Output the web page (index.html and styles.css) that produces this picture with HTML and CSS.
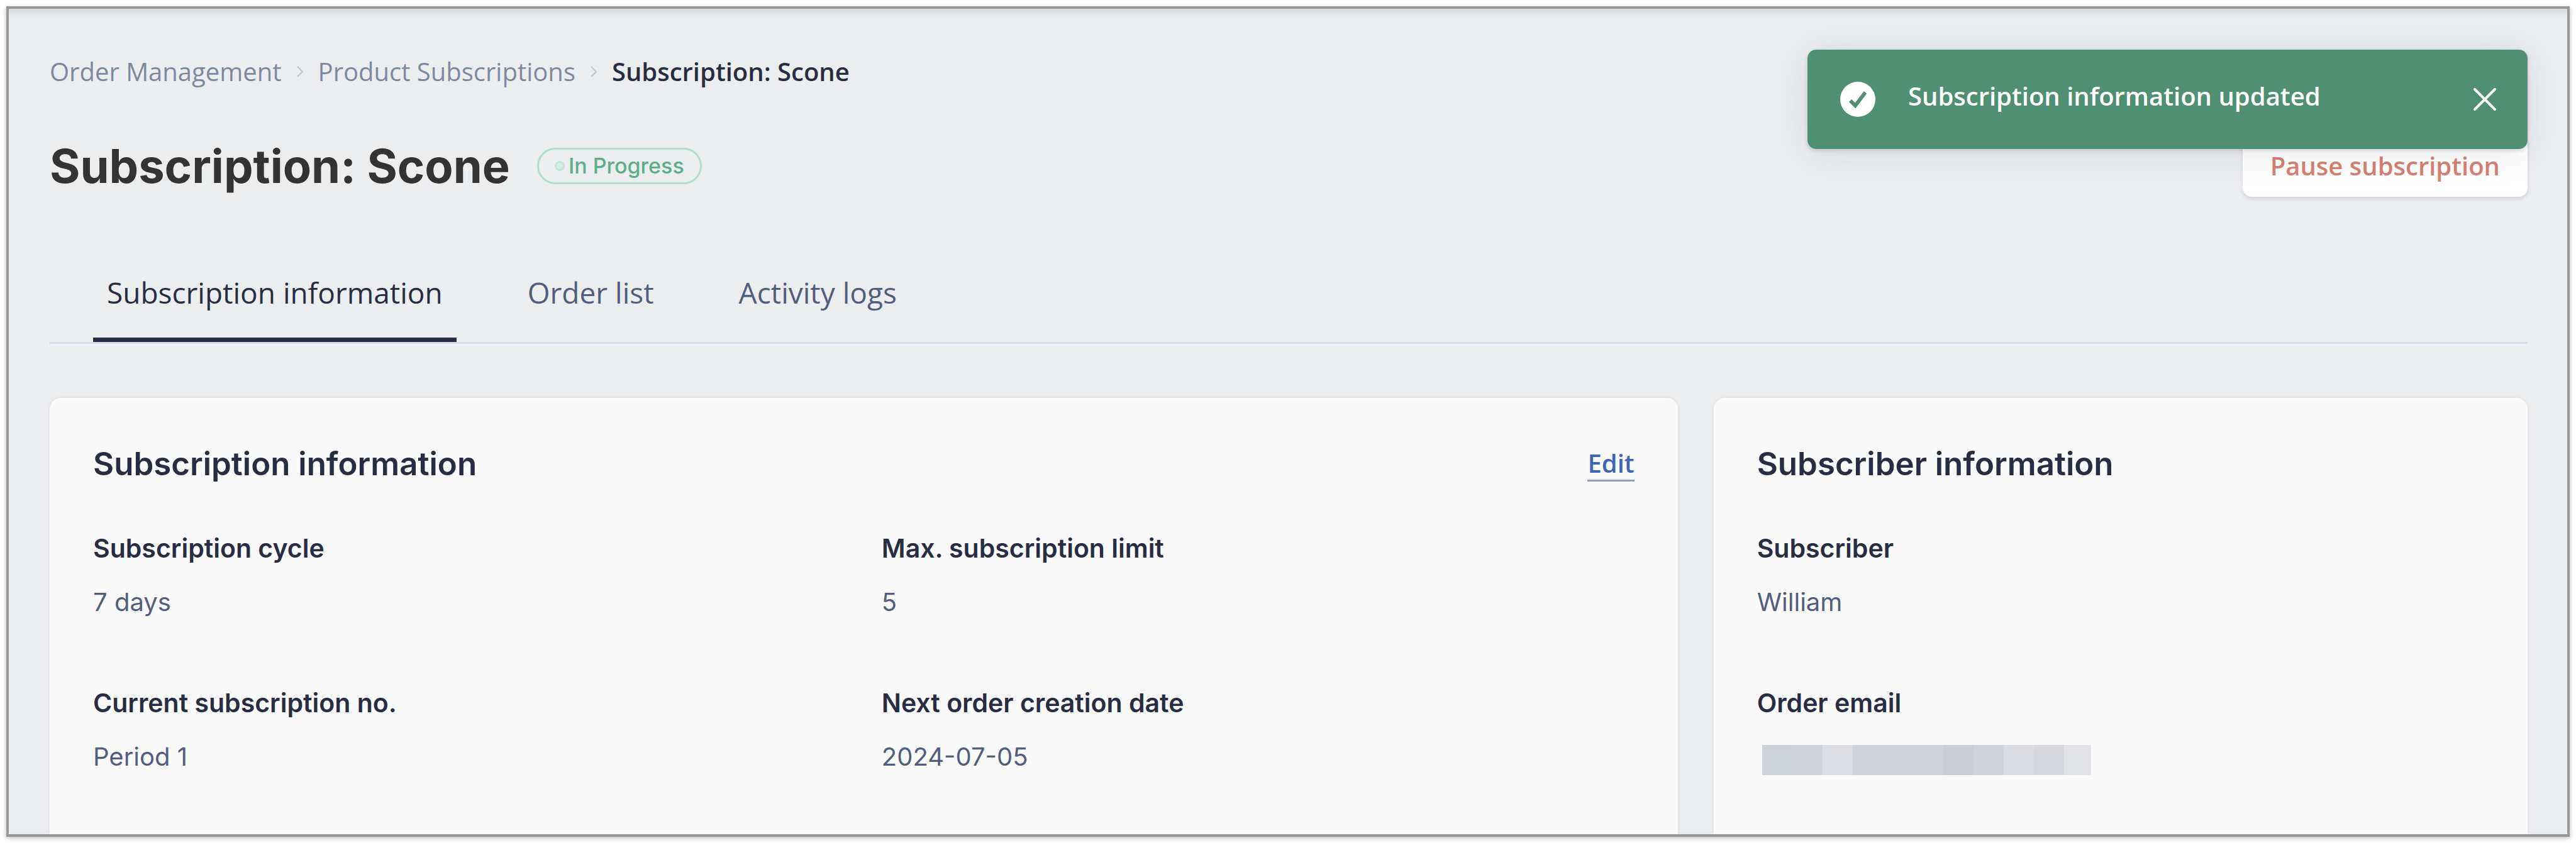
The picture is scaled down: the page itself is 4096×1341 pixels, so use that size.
FILE: index.html
```html
<!DOCTYPE html>
<html lang="en">
<head>
    <meta charset="UTF-8">
    <meta name="viewport" content="width=device-width, initial-scale=1.0">
    <title>Subscription: Scone</title>
    <link rel="stylesheet" href="styles.css">
</head>
<body>

<div class="window">
    <div class="toast" role="status">
        <svg class="toast-icon" viewBox="0 0 56 56" aria-hidden="true">
            <circle cx="28" cy="28" r="28" fill="#fff"/>
            <path d="M16 30l8 8 16-21" fill="none" stroke="#4f9074" stroke-width="6"/>
        </svg>
        <p class="toast-text">Subscription information updated</p>
        <button type="button" class="toast-close" aria-label="Close">
            <svg viewBox="0 0 36 36" aria-hidden="true">
                <path d="M2 2l32 32M34 2L2 34" fill="none" stroke="#fff" stroke-width="4" stroke-linecap="round"/>
            </svg>
        </button>
    </div>

    <nav class="breadcrumb">
        <a href="#">Order Management</a>
        <svg class="chevron" viewBox="0 0 10 18" aria-hidden="true"><path d="M1 1l8 8-8 8"/></svg>
        <a href="#">Product Subscriptions</a>
        <svg class="chevron" viewBox="0 0 10 18" aria-hidden="true"><path d="M1 1l8 8-8 8"/></svg>
        <span class="current">Subscription: Scone</span>
    </nav>

    <header class="page-header">
        <h1>Subscription: Scone</h1>
        <span class="badge"><span class="badge-dot"></span>In Progress</span>
        <button type="button" class="pause-button">Pause subscription</button>
    </header>

    <nav class="tabs">
        <a href="#" class="tab active">Subscription information</a>
        <a href="#" class="tab">Order list</a>
        <a href="#" class="tab">Activity logs</a>
    </nav>

    <main class="cards">
        <section class="card">
            <div class="card-header">
                <h2>Subscription information</h2>
                <a href="#" class="edit-link">Edit</a>
            </div>
            <dl class="fields two-columns">
                <div class="field">
                    <dt>Subscription cycle</dt>
                    <dd>7 days</dd>
                </div>
                <div class="field">
                    <dt>Max. subscription limit</dt>
                    <dd>5</dd>
                </div>
                <div class="field">
                    <dt>Current subscription no.</dt>
                    <dd>Period 1</dd>
                </div>
                <div class="field">
                    <dt>Next order creation date</dt>
                    <dd>2024-07-05</dd>
                </div>
            </dl>
        </section>

        <section class="card">
            <div class="card-header">
                <h2>Subscriber information</h2>
            </div>
            <dl class="fields">
                <div class="field">
                    <dt>Subscriber</dt>
                    <dd>William</dd>
                </div>
                <div class="field">
                    <dt>Order email</dt>
                    <dd><span class="redacted"></span></dd>
                </div>
            </dl>
        </section>
    </main>
</div>

</body>
</html>
```
FILE: styles.css
```css
* {
    box-sizing: border-box;
}

body {
    margin: 0;
    padding: 10px;
    height: 100vh;
    background-color: #fff;
    font-family: 'Open Sans', sans-serif;
    font-size: 40px;
    line-height: 61px;
    color: #282d43;
}

h1, h2, p, dl, dt, dd {
    margin: 0;
}

a {
    color: inherit;
    text-decoration: none;
}

button {
    font: inherit;
    border: none;
    cursor: pointer;
}

.window {
    position: relative;
    height: 100%;
    padding: 69px 63px 0 65px;
    overflow: hidden;
    background: linear-gradient(#d9dadc, #ebedef 14px);
    border: 4px solid #96999b;
    box-shadow: 0 2px 6px rgba(0, 0, 0, 0.3);
    display: flex;
    flex-direction: column;
}

/* Breadcrumb */
.breadcrumb {
    display: flex;
    align-items: center;
    gap: 24px;
    color: #7e899f;
}

.breadcrumb .current {
    font-weight: 600;
    color: #282d43;
}

.chevron {
    width: 10px;
    height: 18px;
    fill: none;
    stroke: #c0c6d2;
    stroke-width: 2;
}

/* Title row */
.page-header {
    display: flex;
    align-items: center;
    margin-top: 70px;
}

h1 {
    font-family: Inter, sans-serif;
    font-size: 74px;
    line-height: 92px;
    font-weight: 700;
    color: #333;
}

.badge {
    display: flex;
    align-items: center;
    gap: 6px;
    height: 58px;
    margin-left: 43px;
    padding: 0 25px;
    border: 3px solid #b0dfca;
    border-radius: 29px;
    font-family: Inter, sans-serif;
    font-size: 34px;
    font-weight: 500;
    color: #5dae8b;
}

.badge-dot {
    width: 16px;
    height: 16px;
    border: 3px solid #c4e6d8;
    border-radius: 50%;
    background-color: #d9ebe4;
}

.pause-button {
    height: 99px;
    margin-left: auto;
    padding: 0 44px;
    border-radius: 14px;
    background-color: #fff;
    box-shadow: 0 3px 6px rgba(34, 43, 69, 0.14);
    font-weight: 600;
    color: #d9806f;
}

/* Toast */
.toast {
    position: absolute;
    top: 65px;
    right: 63px;
    z-index: 1;
    display: flex;
    align-items: center;
    width: 1145px;
    height: 158px;
    padding: 0 50px 0 52px;
    border-radius: 14px;
    background-color: #4f9074;
    box-shadow: 0 3px 6px rgba(34, 43, 69, 0.14), 0 6px 60px rgba(34, 43, 69, 0.1);
    color: #fff;
}

.toast-icon {
    width: 56px;
    height: 56px;
}

.toast-text {
    flex: 1;
    margin-left: 52px;
    padding-bottom: 12px;
    font-weight: 600;
}

.toast-close {
    display: flex;
    padding: 0;
    background: none;
}

.toast-close svg {
    width: 36px;
    height: 36px;
}

/* Tabs */
.tabs {
    display: flex;
    gap: 91px;
    margin-top: 80px;
    padding: 0 69px;
    border-bottom: 3px solid #d5dde7;
    font-size: 46px;
    line-height: 70px;
    color: #525d7f;
}

.tab {
    padding: 37px 22px;
    border-bottom: 7px solid transparent;
}

.tab.active {
    border-bottom-color: #282d43;
    color: #282d43;
}

/* Cards */
.cards {
    flex: 1;
    display: grid;
    grid-template-columns: 2fr 1fr;
    gap: 57px;
    margin-top: 86px;
    font-family: Inter, sans-serif;
}

.card {
    padding: 69px;
    border-radius: 18px 18px 0 0;
    background-color: #fafafa;
    box-shadow: 0 0 6px rgba(34, 43, 69, 0.08);
}

.card-header {
    display: flex;
    align-items: center;
    justify-content: space-between;
}

h2 {
    font-size: 51px;
    line-height: 72px;
    font-weight: 600;
}

.edit-link {
    border-bottom: 3px solid #8a9cd0;
    font-family: 'Open Sans', sans-serif;
    line-height: 52px;
    font-weight: 600;
    color: #3d66b5;
}

.fields {
    display: grid;
    gap: 100px 57px;
    margin-top: 68px;
}

.two-columns {
    grid-template-columns: 1fr 1fr;
}

dt {
    font-size: 41px;
    font-weight: 600;
}

dd {
    margin-top: 24px;
    color: #525d7f;
}

/* Hidden e-mail address, drawn as a row of grey blocks */
.redacted {
    display: block;
    width: 523px;
    height: 48px;
    margin: 36px 8px 0;
    background: linear-gradient(90deg,
        #ced2dc 48px, #d0d3db 48px 96px, #dddee3 96px 144px,
        #d0d3dc 144px 288px, #cbced8 288px 336px, #d0d3dd 336px 384px,
        #dbdce1 384px 432px, #d7d8dd 432px 480px, #e2e3e7 480px);
}
```
